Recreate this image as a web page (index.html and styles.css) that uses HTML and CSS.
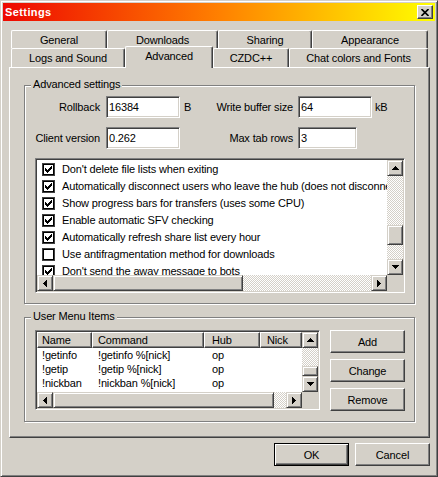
FILE: index.html
```html
<!DOCTYPE html>
<html>
<head>
<meta charset="utf-8">
<title>Settings</title>
<link rel="stylesheet" href="styles.css">
</head>
<body>
<div class="window">
  <div class="titlebar">
    <span class="title">Settings</span>
    <span class="capbtn"><svg width="8" height="7" viewBox="0 0 8 7"><path d="M0.5 0 L7.5 7 M7.5 0 L0.5 7" stroke="#000" stroke-width="1.6"/></svg></span>
  </div>

  <div class="tabctrl">
    <div class="tabrow back">
      <div class="tab t-general">General</div>
      <div class="tab t-downloads">Downloads</div>
      <div class="tab t-sharing">Sharing</div>
      <div class="tab t-appearance">Appearance</div>
    </div>
    <div class="tabrow front">
      <div class="tab t-logs">Logs and Sound</div>
      <div class="tab t-advanced selected">Advanced</div>
      <div class="tab t-czdc">CZDC++</div>
      <div class="tab t-chat">Chat colors and Fonts</div>
    </div>

    <div class="panel">
      <div class="group g-advanced">
        <span class="legend">Advanced settings</span>
        <div class="frow">
          <span class="lbl1">Rollback</span>
          <span class="edit e-wide">16384</span>
          <span class="unit1">B</span>
          <span class="lbl2">Write buffer size</span>
          <span class="edit e-wide">64</span>
          <span class="unit2">kB</span>
        </div>
        <div class="frow">
          <span class="lbl1">Client version</span>
          <span class="edit e-wide">0.262</span>
          <span class="unit1"></span>
          <span class="lbl2">Max tab rows</span>
          <span class="edit e-narrow">3</span>
        </div>

        <div class="listbox">
          <div class="items">
            <div class="item"><span class="chk on"></span><span class="itxt">Don't delete file lists when exiting</span></div>
            <div class="item"><span class="chk on"></span><span class="itxt">Automatically disconnect users who leave the hub (does not disconnect when hub goes down / you leave it)</span></div>
            <div class="item"><span class="chk on"></span><span class="itxt">Show progress bars for transfers (uses some CPU)</span></div>
            <div class="item"><span class="chk on"></span><span class="itxt">Enable automatic SFV checking</span></div>
            <div class="item"><span class="chk on"></span><span class="itxt">Automatically refresh share list every hour</span></div>
            <div class="item"><span class="chk"></span><span class="itxt">Use antifragmentation method for downloads</span></div>
            <div class="item"><span class="chk on"></span><span class="itxt">Don't send the away message to bots</span></div>
          </div>
          <div class="vscroll">
            <span class="arrow"><svg width="7" height="4" viewBox="0 0 7 4"><path d="M3 0h1v1h1v1h1v1h1v1H0V3h1V2h1V1h1z" fill="#000"/></svg></span>
            <div class="track"><span class="thumb vthumb1"></span></div>
            <span class="arrow"><svg width="7" height="4" viewBox="0 0 7 4"><path d="M0 0h7v1H6v1H5v1H4v1H3V3H2V2H1V1H0z" fill="#000"/></svg></span>
          </div>
          <div class="hscroll">
            <span class="arrow"><svg width="4" height="7" viewBox="0 0 4 7"><path d="M3 0h1v7H3V6H2V5H1V4H0V3h1V2h1V1h1z" fill="#000"/></svg></span>
            <div class="track htrack"><span class="thumb hthumb1"></span></div>
            <span class="arrow"><svg width="4" height="7" viewBox="0 0 4 7"><path d="M0 0h1v1h1v1h1v1h1v1H3v1H2v1H1v1H0z" fill="#000"/></svg></span>
          </div>
          <div class="corner"></div>
        </div>
      </div>

      <div class="group g-menu">
        <span class="legend">User Menu Items</span>
        <div class="listview">
          <div class="lvbody">
            <div class="lvhead">
              <span class="hc c-name">Name</span>
              <span class="hc c-cmd">Command</span>
              <span class="hc c-hub">Hub</span>
              <span class="hc c-nick">Nick</span>
            </div>
            <div class="lvrow"><span class="c-name">!getinfo</span><span class="c-cmd">!getinfo %[nick]</span><span class="c-hub">op</span><span class="c-nick"></span></div>
            <div class="lvrow"><span class="c-name">!getip</span><span class="c-cmd">!getip %[nick]</span><span class="c-hub">op</span><span class="c-nick"></span></div>
            <div class="lvrow"><span class="c-name">!nickban</span><span class="c-cmd">!nickban %[nick]</span><span class="c-hub">op</span><span class="c-nick"></span></div>
          </div>
          <div class="vscroll">
            <span class="arrow"><svg width="7" height="4" viewBox="0 0 7 4"><path d="M3 0h1v1h1v1h1v1h1v1H0V3h1V2h1V1h1z" fill="#000"/></svg></span>
            <div class="track"><span class="thumb vthumb2"></span></div>
            <span class="arrow"><svg width="7" height="4" viewBox="0 0 7 4"><path d="M0 0h7v1H6v1H5v1H4v1H3V3H2V2H1V1H0z" fill="#000"/></svg></span>
          </div>
          <div class="hscroll">
            <span class="arrow"><svg width="4" height="7" viewBox="0 0 4 7"><path d="M3 0h1v7H3V6H2V5H1V4H0V3h1V2h1V1h1z" fill="#000"/></svg></span>
            <div class="track htrack"><span class="thumb hthumb2"></span></div>
            <span class="arrow"><svg width="4" height="7" viewBox="0 0 4 7"><path d="M0 0h1v1h1v1h1v1h1v1H3v1H2v1H1v1H0z" fill="#000"/></svg></span>
          </div>
          <div class="corner"></div>
        </div>
        <div class="sidebtns">
          <span class="btn">Add</span>
          <span class="btn">Change</span>
          <span class="btn">Remove</span>
        </div>
      </div>
    </div>
  </div>

  <div class="footer">
    <span class="btn default">OK</span>
    <span class="btn">Cancel</span>
  </div>
</div>
</body>
</html>
```

FILE: styles.css
```css
* { box-sizing: border-box; }
html, body { margin: 0; padding: 0; background: #d4d0c8; }
body {
  font-family: "Liberation Sans", Arial, sans-serif;
  font-size: 11px;
  letter-spacing: -0.15px;
  color: #000;
}

.window {
  width: 438px;
  height: 477px;
  background: #d4d0c8;
  border: 1px solid;
  border-color: #d4d0c8 #404040 #404040 #d4d0c8;
  box-shadow: inset 1px 1px #fff, inset -1px -1px #808080;
  padding: 2px;
  display: flex;
  flex-direction: column;
}

/* title bar */
.titlebar {
  height: 18px;
  flex: none;
  display: flex;
  align-items: center;
  justify-content: space-between;
  padding: 0 2px;
  background: linear-gradient(to right, #ee0800, #ff8000 50%, #ffff00);
}
.title {
  color: #fff;
  font-weight: bold;
  letter-spacing: 0.4px;
  line-height: 14px;
}
.capbtn {
  width: 16px;
  height: 14px;
  display: flex;
  align-items: center;
  justify-content: center;
  background: #d4d0c8;
  border: 1px solid;
  border-color: #fff #404040 #404040 #fff;
  box-shadow: inset -1px -1px #808080;
}

/* tab control */
.tabctrl {
  margin: 9px 0 0 6px;
  width: 421px;
  flex: none;
}
.tabrow {
  display: flex;
  padding-left: 2px;
}
.tabrow.back { height: 18px; }
.tabrow.front { height: 19px; align-items: flex-end; }
.tab {
  height: 18px;
  border-top: 1px solid #fff;
  border-left: 1px solid #fff;
  border-right: 1px solid #404040;
  box-shadow: inset -1px 0 #808080;
  border-radius: 2px 2px 0 0;
  text-align: center;
  padding-top: 2px;
  line-height: 14px;
  white-space: nowrap;
  background: #d4d0c8;
}
.tabrow.front .tab { height: 19px; }
.tabrow.front .tab.selected {
  height: 22px;
  margin-bottom: -1px;
  position: relative;
  z-index: 2;
}
.t-general { width: 96px; }
.t-downloads { width: 111px; }
.t-sharing { width: 94px; }
.t-appearance { width: 116px; }
.t-logs { width: 114px; }
.t-advanced { width: 88px; }
.t-czdc { width: 76px; }
.t-chat { width: 139px; }

.panel {
  position: relative;
  z-index: 1;
  height: 371px;
  border: 1px solid;
  border-color: #fff #404040 #404040 #fff;
  box-shadow: inset -1px -1px #808080;
  padding: 17px 14px 0 14px;
}

/* group boxes */
.group {
  position: relative;
  border: 1px solid #808080;
  box-shadow: inset 1px 1px #fff, 1px 1px #fff;
}
.legend {
  position: absolute;
  top: -8px;
  left: 6px;
  padding: 0 2px;
  line-height: 13px;
  background: #d4d0c8;
  white-space: nowrap;
}
.g-advanced { padding: 10px 9px 10px 10px; }
.g-menu {
  margin-top: 13px;
  padding: 12px 9px 10px 10px;
  display: flex;
  gap: 10px;
}

/* field rows */
.frow {
  display: flex;
  align-items: center;
  height: 22px;
  white-space: nowrap;
}
.frow + .frow { margin-top: 9px; }
.lbl1 { width: 65px; text-align: right; margin-right: 6px; }
.unit1 { width: 24px; padding-left: 4px; }
.lbl2 { width: 89px; text-align: right; margin-right: 5px; }
.unit2 { padding-left: 3px; }
.edit {
  height: 22px;
  background: #fff;
  border: 1px solid;
  border-color: #808080 #fff #fff #808080;
  box-shadow: inset 1px 1px #404040, inset -1px -1px #d4d0c8;
  padding: 1px 2px;
  line-height: 18px;
}
.e-wide { width: 74px; }
.e-narrow { width: 59px; }

/* sunken list containers */
.listbox, .listview {
  background: #fff;
  border: 1px solid;
  border-color: #808080 #fff #fff #808080;
  box-shadow: inset 1px 1px #404040, inset -1px -1px #d4d0c8;
  padding: 1px;
  display: grid;
  grid-template-columns: 1fr 16px;
  grid-template-rows: 1fr 16px;
}
.listbox {
  margin-top: 9px;
  width: 370px;
  height: 135px;
}
.items {
  min-width: 0;
  overflow: hidden;
  padding-top: 1px;
}
.item {
  height: 17px;
  display: flex;
  align-items: center;
  padding-left: 5px;
  white-space: nowrap;
}
.itxt { margin-left: 7px; line-height: 17px; }
.chk {
  flex: none;
  width: 13px;
  height: 13px;
  background: #fff;
  border: 1px solid #404040;
  box-shadow: inset 0 0 0 1px #000;
  position: relative;
}
.chk.on::after {
  content: "";
  position: absolute;
  left: 2px;
  top: 2px;
  width: 7px;
  height: 7px;
  background:
    linear-gradient(#000,#000) 6px 0/1px 1px no-repeat,
    linear-gradient(#000,#000) 5px 1px/2px 1px no-repeat,
    linear-gradient(#000,#000) 0 2px/1px 1px no-repeat,
    linear-gradient(#000,#000) 4px 2px/3px 1px no-repeat,
    linear-gradient(#000,#000) 0 3px/2px 1px no-repeat,
    linear-gradient(#000,#000) 3px 3px/3px 1px no-repeat,
    linear-gradient(#000,#000) 0 4px/5px 1px no-repeat,
    linear-gradient(#000,#000) 1px 5px/3px 1px no-repeat,
    linear-gradient(#000,#000) 2px 6px/1px 1px no-repeat;
}

/* scrollbars */
.vscroll { display: flex; flex-direction: column; }
.hscroll { display: flex; }
.arrow {
  flex: none;
  width: 16px;
  height: 16px;
  display: flex;
  align-items: center;
  justify-content: center;
  background: #d4d0c8;
  border: 1px solid;
  border-color: #d4d0c8 #404040 #404040 #d4d0c8;
  box-shadow: inset 1px 1px #fff, inset -1px -1px #808080;
}
.arrow svg { display: block; }
.track {
  flex: 1;
  display: flex;
  flex-direction: column;
  background-color: #fff;
  background-image: repeating-conic-gradient(#d4d0c8 0 25%, #fff 0 50%);
  background-size: 2px 2px;
}
.htrack { flex-direction: row; }
.thumb {
  flex: none;
  background: #d4d0c8;
  border: 1px solid;
  border-color: #d4d0c8 #404040 #404040 #d4d0c8;
  box-shadow: inset 1px 1px #fff, inset -1px -1px #808080;
}
.vthumb1 { margin-top: 49px; height: 20px; }
.hthumb1 { width: 190px; }
.vthumb2 { margin-top: 18px; height: 10px; }
.hthumb2 { width: 221px; }
.corner { background: #d4d0c8; }

/* list view */
.listview {
  flex: none;
  width: 285px;
  height: 80px;
}
.lvbody { min-width: 0; overflow: hidden; }
.lvhead { display: flex; height: 16px; }
.hc {
  height: 16px;
  line-height: 14px;
  background: #d4d0c8;
  border: 1px solid;
  border-color: #fff #404040 #404040 #fff;
  box-shadow: inset -1px -1px #808080;
  white-space: nowrap;
}
.lvrow { display: flex; height: 14px; line-height: 14px; white-space: nowrap; }
.c-name { width: 55px; padding-left: 4px; flex: none; }
.c-cmd { width: 112px; padding-left: 5px; flex: none; }
.c-hub { width: 56px; padding-left: 7px; flex: none; }
.c-nick { flex: 1; padding-left: 6px; }
.lvrow .c-name { padding-left: 5px; }
.lvrow .c-cmd { padding-left: 6px; }
.lvrow .c-hub { padding-left: 8px; }

/* buttons */
.sidebtns {
  display: flex;
  flex-direction: column;
  gap: 6px;
}
.btn {
  width: 75px;
  height: 23px;
  display: flex;
  align-items: center;
  justify-content: center;
  background: #d4d0c8;
  border: 1px solid;
  border-color: #fff #404040 #404040 #fff;
  box-shadow: inset -1px -1px #808080;
  white-space: nowrap;
}
.btn.default {
  border-color: #000;
  box-shadow: inset 1px 1px #fff, inset -1px -1px #404040, inset -2px -2px #808080;
}
.footer {
  display: flex;
  justify-content: flex-end;
  gap: 6px;
  margin-top: 5px;
  padding-right: 5px;
}
```
